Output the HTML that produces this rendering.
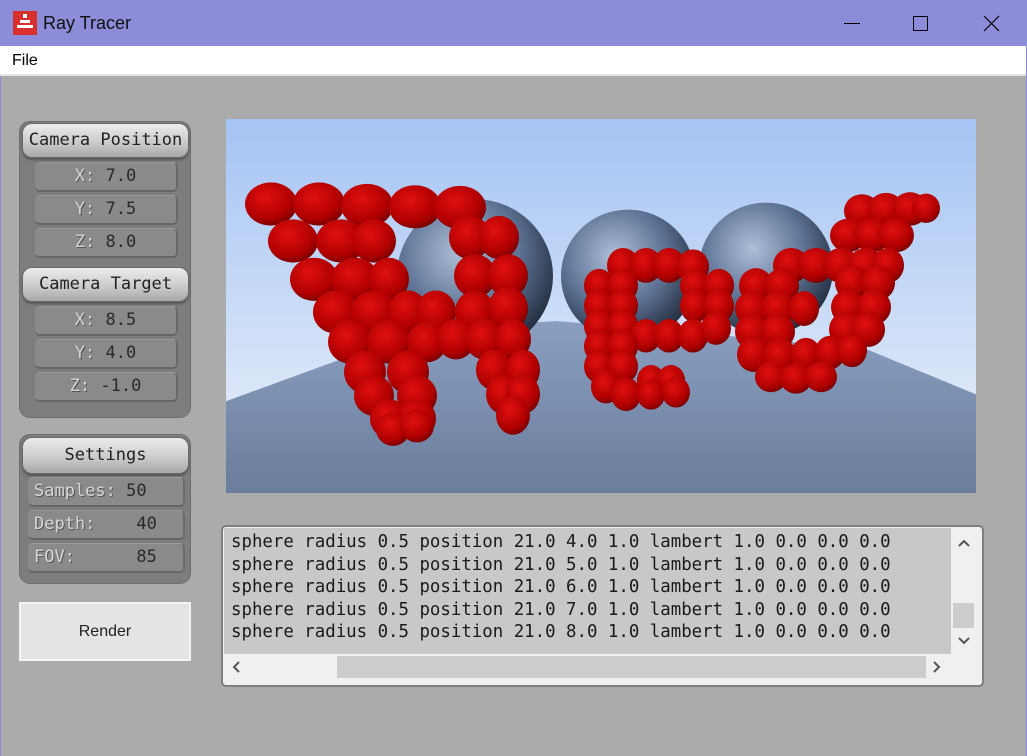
<!DOCTYPE html>
<html><head><style>
*{margin:0;padding:0;box-sizing:border-box}
body{width:1027px;height:756px;overflow:hidden;background:#ababab;font-family:"Liberation Sans",sans-serif;position:relative}
.abs{position:absolute}
#title{left:0;top:0;width:1027px;height:46px;background:#8c8cd8}
#menu{left:0;top:46px;width:1026px;height:30px;background:#fff;border-bottom:2px solid #e4e4e4}
.grp{background:#7d7d7d;border-radius:11px;border:1px solid #6e6e6e}
.hdr{background:linear-gradient(#ececec,#c8c8c8 60%,#a8a8a8);border-radius:10px;border:1px solid #6a6a6a;font-family:"DejaVu Sans Mono","Liberation Mono",monospace;font-size:17px;color:#222;text-align:center;box-shadow:0 2px 2px #555}
.fld{background:#8a8a8a;border-radius:5px;border-bottom:2px solid #666;border-right:2px solid #6a6a6a;border-top:1px solid #999;font-family:"DejaVu Sans Mono","Liberation Mono",monospace;font-size:17px;color:#2a2a2a;text-align:center;line-height:27px}
.fld b{font-weight:normal;color:#d6d6d6;text-shadow:1px 1px 0 #555}
.fl{text-align:left;padding-left:6px;white-space:pre}
</style></head><body>
<div id="title" class="abs">
 <div class="abs" style="left:13px;top:11px;width:24px;height:24px;background:#d8302c"></div>
 <div class="abs" style="left:23px;top:14px;width:4px;height:4px;background:#fff"></div>
 <div class="abs" style="left:20px;top:20px;width:10px;height:3px;background:#fff"></div>
 <div class="abs" style="left:17px;top:25px;width:16px;height:3px;background:#fff"></div>
 <div class="abs" style="left:43px;top:13px;font-size:18px;color:#111">Ray Tracer</div>
 <div class="abs" style="left:844px;top:23px;width:16px;height:1px;background:#000"></div>
 <div class="abs" style="left:913px;top:16px;width:15px;height:15px;border:1px solid #000"></div>
 <svg class="abs" style="left:983px;top:15px" width="17" height="17"><path d="M1 1L16 16M16 1L1 16" stroke="#000" stroke-width="1.2"/></svg>
</div>
<div class="abs" style="right:0;top:46px;width:1px;height:710px;background:#8c8cd8"></div>
<div class="abs" style="left:0;top:46px;width:1px;height:710px;background:#8c8cd8"></div>
<div id="menu" class="abs"><span class="abs" style="left:12px;top:6px;font-size:16px;color:#000">File</span></div>

<div class="abs grp" style="left:19px;top:121px;width:172px;height:297px"></div>
<div class="abs hdr" style="left:22px;top:123px;width:167px;height:35px;line-height:33px">Camera Position</div>
<div class="abs fld" style="left:35px;top:162px;width:143px;height:30px"><b>X:</b> 7.0</div>
<div class="abs fld" style="left:35px;top:195px;width:143px;height:30px"><b>Y:</b> 7.5</div>
<div class="abs fld" style="left:35px;top:228px;width:143px;height:30px"><b>Z:</b> 8.0</div>
<div class="abs hdr" style="left:22px;top:267px;width:167px;height:35px;line-height:33px">Camera Target</div>
<div class="abs fld" style="left:35px;top:306px;width:143px;height:30px"><b>X:</b> 8.5</div>
<div class="abs fld" style="left:35px;top:339px;width:143px;height:30px"><b>Y:</b> 4.0</div>
<div class="abs fld" style="left:35px;top:372px;width:143px;height:30px"><b>Z:</b> -1.0</div>

<div class="abs grp" style="left:19px;top:434px;width:172px;height:150px"></div>
<div class="abs hdr" style="left:22px;top:437px;width:167px;height:37px;line-height:35px">Settings</div>
<div class="abs fld fl" style="left:28px;top:477px;width:157px;height:30px"><b>Samples:</b> 50</div>
<div class="abs fld fl" style="left:28px;top:510px;width:157px;height:30px"><b>Depth:</b>    40</div>
<div class="abs fld fl" style="left:28px;top:543px;width:157px;height:30px"><b>FOV:</b>      85</div>

<div class="abs" style="left:19px;top:602px;width:172px;height:59px;background:#e4e4e4;border:2px solid #f4f4f4;text-align:center;line-height:55px;font-size:16px;color:#222">Render</div>

<svg class="abs" style="left:226px;top:119px" width="750" height="374" viewBox="0 0 750 374">
<defs>
<linearGradient id="sky" x1="0" y1="0" x2="0" y2="1"><stop offset="0" stop-color="#a4c4f4"/><stop offset="1" stop-color="#eef3fa"/></linearGradient>
<linearGradient id="fl" x1="0" y1="0" x2="0" y2="1"><stop offset="0" stop-color="#8a9fc0"/><stop offset="1" stop-color="#6a7c9c"/></linearGradient>
<radialGradient id="ch" cx="0.4" cy="0.35" r="0.7"><stop offset="0" stop-color="#aebfd8"/><stop offset="0.55" stop-color="#5d7294"/><stop offset="1" stop-color="#1e2838"/></radialGradient>
<radialGradient id="rd" cx="0.4" cy="0.35" r="0.7"><stop offset="0" stop-color="#e01010"/><stop offset="0.7" stop-color="#b00000"/><stop offset="1" stop-color="#700000"/></radialGradient>
</defs>
<rect width="750" height="374" fill="url(#sky)"/>
<g transform="scale(1,0.697)">
<polygon points="0,405 200,300 330,290 420,300 640,330 750,395 750,540 0,540" fill="url(#fl)"/>
<ellipse cx="249" cy="225" rx="78" ry="110" fill="url(#ch)"/>
<ellipse cx="402" cy="225" rx="67" ry="95" fill="url(#ch)"/>
<ellipse cx="540" cy="215" rx="67" ry="95" fill="url(#ch)"/>
<g fill="url(#rd)">
<ellipse cx="45" cy="122" rx="26" ry="31"/><ellipse cx="93" cy="122" rx="26" ry="31"/><ellipse cx="141" cy="124" rx="26" ry="31"/><ellipse cx="189" cy="126" rx="26" ry="31"/><ellipse cx="234" cy="127" rx="26" ry="31"/>
<ellipse cx="67" cy="175" rx="25" ry="31"/><ellipse cx="115" cy="175" rx="25" ry="31"/><ellipse cx="148" cy="175" rx="22" ry="31"/><ellipse cx="244" cy="170" rx="21" ry="31"/><ellipse cx="273" cy="170" rx="20" ry="31"/>
<ellipse cx="88" cy="230" rx="24" ry="31"/><ellipse cx="129" cy="230" rx="24" ry="31"/><ellipse cx="163" cy="230" rx="20" ry="31"/><ellipse cx="249" cy="225" rx="21" ry="31"/><ellipse cx="282" cy="225" rx="20" ry="31"/>
<ellipse cx="110" cy="277" rx="23" ry="31"/><ellipse cx="148" cy="277" rx="23" ry="31"/><ellipse cx="182" cy="277" rx="20" ry="31"/><ellipse cx="210" cy="277" rx="20" ry="31"/><ellipse cx="249" cy="277" rx="20" ry="31"/><ellipse cx="282" cy="272" rx="20" ry="31"/>
<ellipse cx="124" cy="320" rx="22" ry="31"/><ellipse cx="163" cy="320" rx="22" ry="31"/><ellipse cx="201" cy="320" rx="20" ry="29"/><ellipse cx="230" cy="316" rx="19" ry="29"/><ellipse cx="258" cy="316" rx="19" ry="29"/><ellipse cx="287" cy="316" rx="18" ry="29"/>
<ellipse cx="139" cy="363" rx="21" ry="31"/><ellipse cx="182" cy="363" rx="21" ry="31"/><ellipse cx="268" cy="360" rx="18" ry="29"/><ellipse cx="297" cy="360" rx="17" ry="29"/>
<ellipse cx="148" cy="397" rx="20" ry="29"/><ellipse cx="191" cy="397" rx="20" ry="29"/><ellipse cx="277" cy="395" rx="17" ry="28"/><ellipse cx="297" cy="395" rx="17" ry="28"/>
<ellipse cx="163" cy="430" rx="19" ry="28"/><ellipse cx="191" cy="430" rx="19" ry="28"/><ellipse cx="287" cy="425" rx="17" ry="28"/>
<ellipse cx="167" cy="445" rx="17" ry="24"/><ellipse cx="191" cy="440" rx="17" ry="24"/>
<ellipse cx="397" cy="210" rx="16" ry="25"/><ellipse cx="420" cy="210" rx="16" ry="25"/><ellipse cx="443" cy="210" rx="16" ry="25"/><ellipse cx="467" cy="212" rx="16" ry="25"/>
<ellipse cx="373" cy="239" rx="15" ry="24"/><ellipse cx="397" cy="239" rx="15" ry="24"/><ellipse cx="469" cy="239" rx="15" ry="24"/><ellipse cx="493" cy="239" rx="15" ry="24"/>
<ellipse cx="373" cy="268" rx="15" ry="24"/><ellipse cx="397" cy="268" rx="15" ry="24"/><ellipse cx="469" cy="268" rx="15" ry="24"/><ellipse cx="493" cy="268" rx="15" ry="24"/>
<ellipse cx="373" cy="297" rx="15" ry="24"/><ellipse cx="397" cy="297" rx="15" ry="24"/><ellipse cx="420" cy="311" rx="15" ry="24"/><ellipse cx="443" cy="311" rx="15" ry="24"/><ellipse cx="467" cy="311" rx="15" ry="24"/><ellipse cx="490" cy="300" rx="15" ry="24"/>
<ellipse cx="373" cy="326" rx="15" ry="24"/><ellipse cx="397" cy="326" rx="15" ry="24"/>
<ellipse cx="373" cy="355" rx="15" ry="24"/><ellipse cx="397" cy="355" rx="15" ry="24"/><ellipse cx="425" cy="375" rx="14" ry="22"/><ellipse cx="445" cy="375" rx="14" ry="22"/>
<ellipse cx="380" cy="384" rx="15" ry="24"/><ellipse cx="400" cy="395" rx="15" ry="24"/><ellipse cx="425" cy="395" rx="14" ry="22"/><ellipse cx="450" cy="392" rx="14" ry="22"/>
<ellipse cx="636" cy="132" rx="18" ry="24"/><ellipse cx="660" cy="130" rx="18" ry="24"/><ellipse cx="684" cy="129" rx="18" ry="24"/><ellipse cx="700" cy="128" rx="14" ry="21"/>
<ellipse cx="622" cy="167" rx="18" ry="24"/><ellipse cx="646" cy="167" rx="18" ry="24"/><ellipse cx="670" cy="167" rx="18" ry="24"/>
<ellipse cx="565" cy="210" rx="18" ry="25"/><ellipse cx="590" cy="210" rx="18" ry="25"/><ellipse cx="615" cy="210" rx="18" ry="25"/><ellipse cx="640" cy="210" rx="18" ry="25"/><ellipse cx="662" cy="210" rx="16" ry="25"/>
<ellipse cx="530" cy="239" rx="17" ry="25"/><ellipse cx="556" cy="239" rx="17" ry="25"/><ellipse cx="626" cy="235" rx="17" ry="25"/><ellipse cx="652" cy="235" rx="17" ry="25"/>
<ellipse cx="526" cy="272" rx="17" ry="25"/><ellipse cx="552" cy="272" rx="17" ry="25"/><ellipse cx="578" cy="272" rx="15" ry="25"/><ellipse cx="622" cy="270" rx="17" ry="25"/><ellipse cx="648" cy="270" rx="17" ry="25"/>
<ellipse cx="526" cy="305" rx="17" ry="25"/><ellipse cx="552" cy="305" rx="17" ry="25"/><ellipse cx="620" cy="302" rx="17" ry="25"/><ellipse cx="642" cy="302" rx="17" ry="25"/>
<ellipse cx="528" cy="338" rx="17" ry="25"/><ellipse cx="554" cy="340" rx="17" ry="25"/><ellipse cx="580" cy="338" rx="15" ry="24"/><ellipse cx="604" cy="335" rx="15" ry="24"/><ellipse cx="626" cy="332" rx="15" ry="24"/>
<ellipse cx="545" cy="370" rx="16" ry="22"/><ellipse cx="570" cy="372" rx="16" ry="22"/><ellipse cx="595" cy="370" rx="16" ry="22"/>
</g>
</g>
</svg>

<div class="abs" style="left:221px;top:525px;width:763px;height:162px;background:#f0f0f0;border:2px solid #7e7e7e;border-radius:5px"></div>
<div class="abs" style="left:224px;top:528px;width:727px;height:126px;background:#c8c8c8"></div>
<div class="abs" style="left:231px;top:531px;font-family:'DejaVu Sans Mono','Liberation Mono',monospace;font-size:17.4px;line-height:22.5px;color:#1a1a1a;white-space:pre">sphere radius 0.5 position 21.0 4.0 1.0 lambert 1.0 0.0 0.0 0.0
sphere radius 0.5 position 21.0 5.0 1.0 lambert 1.0 0.0 0.0 0.0
sphere radius 0.5 position 21.0 6.0 1.0 lambert 1.0 0.0 0.0 0.0
sphere radius 0.5 position 21.0 7.0 1.0 lambert 1.0 0.0 0.0 0.0
sphere radius 0.5 position 21.0 8.0 1.0 lambert 1.0 0.0 0.0 0.0</div>
<div class="abs" style="left:953px;top:603px;width:21px;height:25px;background:#cdcdcd"></div>
<div class="abs" style="left:337px;top:656px;width:589px;height:22px;background:#cdcdcd"></div>
<svg class="abs" style="left:957px;top:538px" width="14" height="10"><path d="M2 8L7 3L12 8" stroke="#555" stroke-width="2" fill="none"/></svg>
<svg class="abs" style="left:957px;top:636px" width="14" height="10"><path d="M2 2L7 7L12 2" stroke="#555" stroke-width="2" fill="none"/></svg>
<svg class="abs" style="left:231px;top:660px" width="10" height="14"><path d="M8 2L3 7L8 12" stroke="#555" stroke-width="2" fill="none"/></svg>
<svg class="abs" style="left:932px;top:660px" width="10" height="14"><path d="M2 2L7 7L2 12" stroke="#555" stroke-width="2" fill="none"/></svg>
</body></html>
